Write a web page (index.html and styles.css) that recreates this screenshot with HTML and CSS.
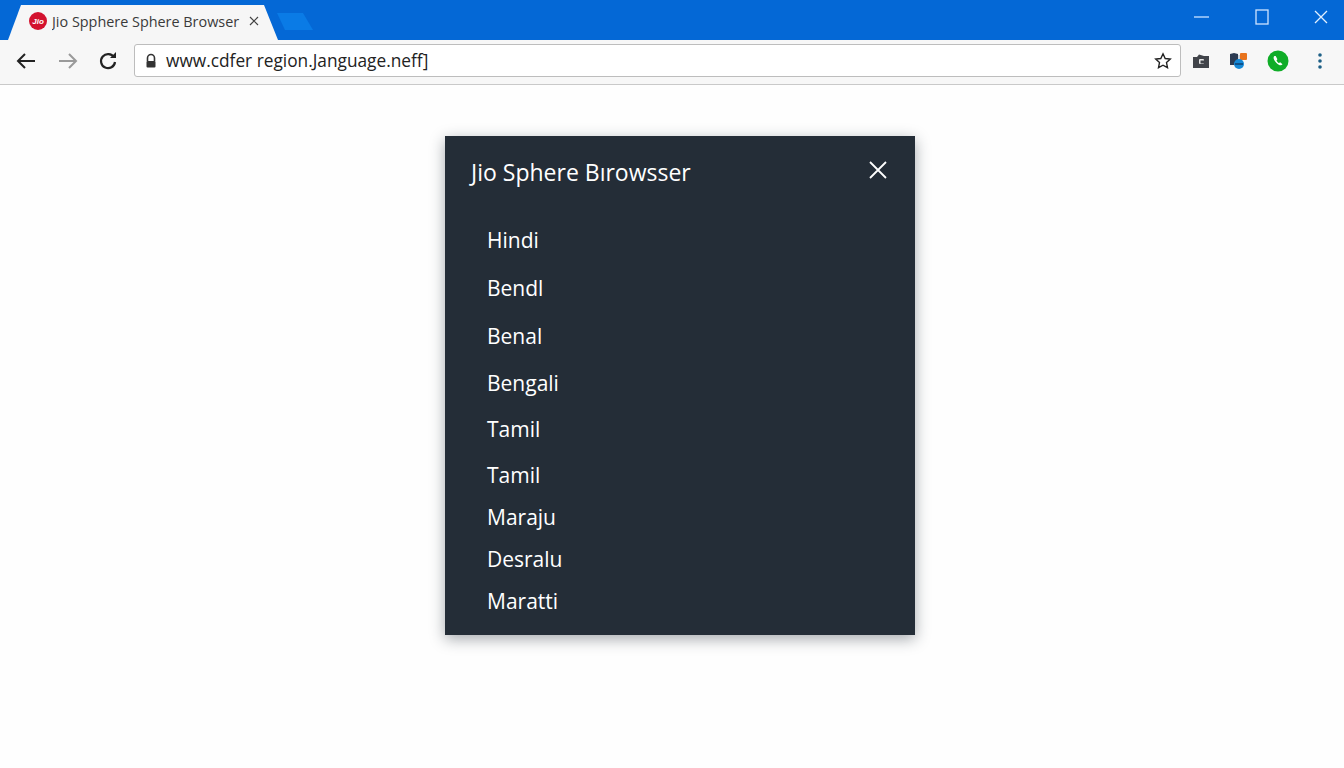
FILE: index.html
```html
<!DOCTYPE html>
<html lang="en">
<head>
<meta charset="utf-8">
<title>Jio Sphere Browser</title>
<link rel="stylesheet" href="styles.css">
</head>
<body>
<header class="titlebar">
  <div class="tab">
    <svg class="jio" width="18" height="18" viewBox="0 0 18 18"><circle cx="9" cy="9" r="9" fill="#d3132f"/><text x="9" y="11.5" class="jio-text" text-anchor="middle">Jio</text></svg>
    <span class="tab-title">Jio Spphere Sphere Browser</span>
    <svg class="tab-close" width="10" height="10" viewBox="0 0 10 10"><path d="M1 1l8 8M9 1l-8 8" stroke="#444" stroke-width="1.2" fill="none"/></svg>
  </div>
  <div class="newtab"></div>
  <div class="winctl">
    <svg width="16" height="16" viewBox="0 0 16 16"><path d="M0 8h15" stroke="#bcdcff" stroke-width="1.4"/></svg>
    <svg width="14" height="16" viewBox="0 0 14 16"><rect x="1" y="1" width="12" height="14" fill="none" stroke="#cfe4ff" stroke-width="1.3"/></svg>
    <svg width="14" height="14" viewBox="0 0 14 14"><path d="M1 1l12 12M13 1L1 13" stroke="#e3f0ff" stroke-width="1.3" fill="none"/></svg>
  </div>
</header>
<nav class="toolbar">
  <svg class="nav-icon" width="22" height="22" viewBox="0 0 22 22"><path d="M20 11H3M10 4l-7 7 7 7" fill="none" stroke="#222" stroke-width="2"/></svg>
  <svg class="nav-icon fwd" width="22" height="22" viewBox="0 0 22 22"><path d="M2 11h17M12 4l7 7-7 7" fill="none" stroke="#9a9a9a" stroke-width="2"/></svg>
  <svg class="nav-icon reload" width="20" height="20" viewBox="0 0 20 20"><path d="M16 6.5A7 7 0 1 0 17 11" fill="none" stroke="#222" stroke-width="2.2"/><path d="M12 7h6V1z" fill="#222"/></svg>
  <div class="omnibox">
    <svg class="lock" width="12" height="16" viewBox="0 0 12 16"><path d="M2.500 8V5a3.500 3.500 0 0 1 7 0v3" fill="none" stroke="#333" stroke-width="1.600"/><rect x="1.500" y="8" width="9" height="6.500" rx="1" fill="#333"/></svg>
    <span class="url">www.cdfer region.Janguage.neff]</span>
    <svg class="star" width="18" height="18" viewBox="0 0 18 18"><path d="M9 1.800l2.200 4.700 5.100.6-3.800 3.500 1 5.100L9 13.200l-4.500 2.500 1-5.100L1.700 7.100l5.100-.6z" fill="none" stroke="#222" stroke-width="1.400"/></svg>
  </div>
  <div class="extensions">
    <svg width="18" height="16" viewBox="0 0 18 16"><path d="M1 4h4l2-2.500 5 1.500h5v12H1z" fill="#41444a"/><rect x="7" y="6" width="5" height="5" rx="1" fill="#e8e8e8"/><rect x="8.500" y="7.500" width="3.500" height="3" fill="#41444a"/></svg>
    <svg width="20" height="18" viewBox="0 0 20 18"><path d="M1 2l4-1 4 1v11H1z" fill="#2c3b52"/><rect x="11" y="1" width="7" height="7" rx="1" fill="#e8741e"/><rect x="9" y="3" width="2" height="9" fill="#cfd6de"/><circle cx="10" cy="12" r="5" fill="#1588d6"/><path d="M6 12h8" stroke="#0c3f70" stroke-width="1.500"/></svg>
    <svg width="22" height="22" viewBox="0 0 22 22"><circle cx="11" cy="11" r="10.500" fill="#10ad28"/><path d="M7.500 6c-1 .6-1.200 2-.4 3.800 1 2.200 3 4.300 5 5.200 1.500.7 2.800.3 3.400-.7l-2.300-2-1.200.8c-1-.5-2-1.600-2.500-2.700l.9-1.200L8.700 6z" fill="#fff"/></svg>
    <svg class="kebab" width="4" height="16" viewBox="0 0 4 16"><circle cx="2" cy="2" r="1.800" fill="#1d5f86"/><circle cx="2" cy="8" r="1.800" fill="#1d5f86"/><circle cx="2" cy="14" r="1.800" fill="#1d5f86"/></svg>
  </div>
</nav>
<main class="page">
  <section class="dialog">
    <div class="dialog-head">
      <h1 class="dialog-title">Jio Sphere Bırowsser</h1>
      <svg class="dialog-close" width="18" height="18" viewBox="0 0 18 18"><path d="M1 1l16 16M17 1L1 17" stroke="#fff" stroke-width="1.800" fill="none"/></svg>
    </div>
    <ul class="langs">
      <li class="lang">Hindi</li>
      <li class="lang gap8">Bendl</li>
      <li class="lang gap8">Benal</li>
      <li class="lang gap7">Bengali</li>
      <li class="lang gap6">Tamil</li>
      <li class="lang gap6">Tamil</li>
      <li class="lang gap2">Maraju</li>
      <li class="lang gap2">Desralu</li>
      <li class="lang gap2">Maratti</li>
    </ul>
  </section>
</main>
</body>
</html>
```

FILE: styles.css
```css
* { box-sizing: border-box; }
html, body { margin: 0; height: 100%; }
body {
  width: 1344px;
  height: 768px;
  overflow: hidden;
  background: #fefefe;
  font-family: "Open Sans", "Noto Sans", sans-serif;
  display: flex;
  flex-direction: column;
}
.titlebar {
  height: 40px;
  flex: none;
  background: #0468d6;
  display: flex;
  align-items: flex-end;
  padding-left: 8px;
}
.tab {
  width: 270px;
  height: 35px;
  background: #f6f6f6;
  clip-path: polygon(0 100%, 13px 0, 256px 0, 270px 100%);
  display: flex;
  align-items: center;
  padding: 0 19px 3px 21px;
}
.jio { flex: none; }
.jio-text { font: italic bold 8px "Liberation Sans", sans-serif; fill: #fff; }
.tab-title {
  margin-left: 5px;
  font-size: 14.4px;
  color: #3a3a3a;
  white-space: nowrap;
  flex: 1;
  overflow: hidden;
}
.tab-close { flex: none; }
.newtab {
  width: 36px;
  height: 17px;
  margin-bottom: 10px;
  margin-left: -1px;
  background: #0a7be6;
  clip-path: polygon(0 0, 26px 0, 36px 100%, 8px 100%);
}
.winctl {
  margin-left: auto;
  height: 40px;
  display: flex;
  align-items: center;
  gap: 45px;
  padding: 0 16px 6px 0;
}
.toolbar {
  height: 45px;
  flex: none;
  background: #f7f7f7;
  border-bottom: 1px solid #c9c9c9;
  display: flex;
  align-items: center;
  padding: 0 20px 3px 15px;
}
.nav-icon { flex: none; }
.fwd { margin-left: 20px; }
.reload { margin-left: 19px; }
.omnibox {
  width: 1047px;
  height: 33px;
  margin-left: 16px;
  background: #fff;
  border: 1px solid #bdbdbd;
  border-radius: 3px;
  display: flex;
  align-items: center;
  padding: 0 8px 0 10px;
}
.lock { flex: none; }
.url {
  margin-left: 9px;
  font-size: 17.3px;
  color: #222;
  white-space: nowrap;
  flex: 1;
}
.star { flex: none; }
.extensions {
  margin-left: 11px;
  display: flex;
  align-items: center;
  gap: 18.5px;
}
.kebab { margin-left: 10px; }
.page {
  flex: 1;
  display: flex;
  justify-content: center;
  align-items: flex-start;
  padding: 51px 0 0 16px;
}
.dialog {
  width: 470px;
  height: 499px;
  background: #242d37;
  color: #fff;
  box-shadow: 0 4px 14px rgba(30, 40, 50, 0.4);
  padding: 0 28px 0 26px;
}
.dialog-head {
  height: 84px;
  display: flex;
  align-items: center;
  justify-content: space-between;
}
.dialog-title {
  margin: 0 0 12px;
  font-size: 23px;
  font-weight: 400;
  white-space: nowrap;
}
.dialog-close { margin-bottom: 16px; }
.langs {
  list-style: none;
  margin: 0;
  padding: 0 0 0 16px;
}
.lang {
  font-size: 21px;
  height: 40px;
  display: flex;
  align-items: center;
}
.gap8 { margin-top: 8px; }
.gap7 { margin-top: 7px; }
.gap6 { margin-top: 6px; }
.gap2 { margin-top: 2px; }
```
